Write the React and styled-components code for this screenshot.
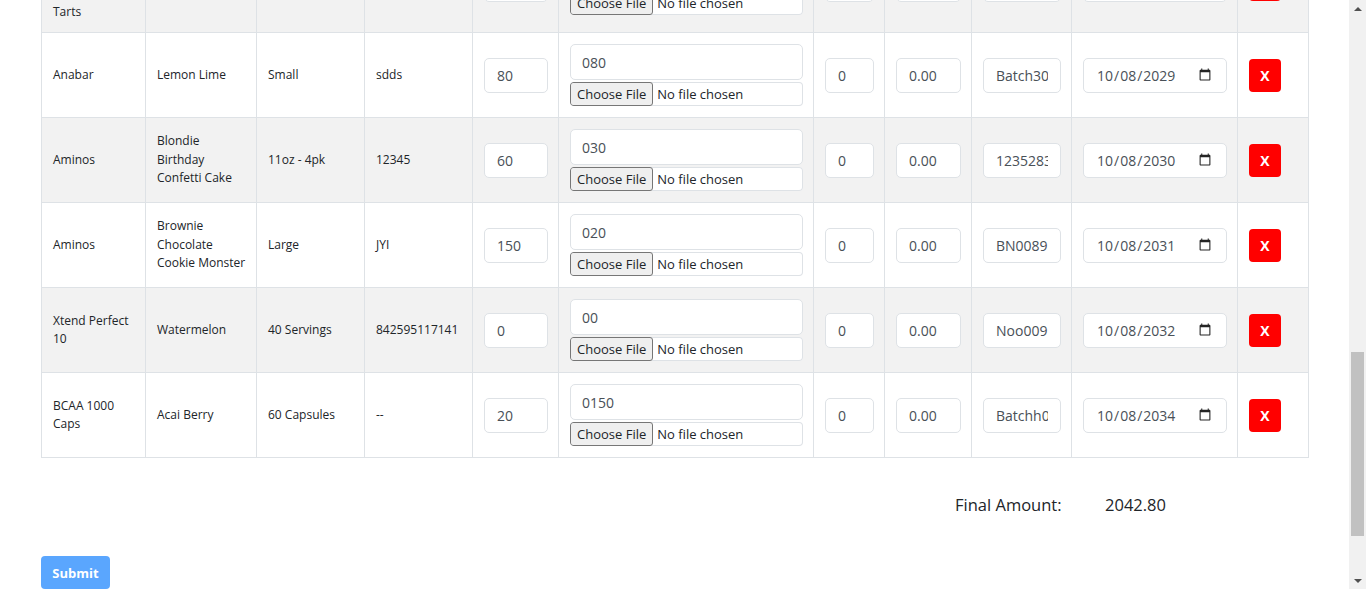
import React from "react";
import styled, { createGlobalStyle } from "styled-components";

const GlobalStyle = createGlobalStyle`
  html, body {
    margin: 0;
    padding: 0;
    background: #fff;
    overflow: hidden;
  }
  body {
    font-family: "Open Sans", "Noto Sans", sans-serif;
    color: #212529;
  }
`;

const Screen = styled.div`
  display: flex;
  width: 1366px;
  height: 589px;
`;

const Page = styled.main`
  flex: 1;
  height: 589px;
  overflow: hidden;
  padding: 0 41px;
  box-sizing: border-box;
`;

// the page is scrolled, so the first row sits partly above the window
const Table = styled.table`
  width: 100%;
  margin-top: -65px;
  border-collapse: collapse;
  table-layout: fixed;
  border: 1px solid #dee2e6;
`;

const Row = styled.tr`
  background: ${(p) => (p.$striped ? "#f2f2f2" : "#fff")};
  height: 85px;
`;

const Cell = styled.td`
  border: 1px solid #dee2e6;
  padding: ${(p) => (p.$text ? "11px 9px 11px 11px" : "11px 10px 11px 11px")};
  vertical-align: middle;
  font-size: 12px;
  line-height: 18.5px;
  color: #212529;
  box-sizing: border-box;
`;

const Field = styled.input`
  display: block;
  width: 100%;
  box-sizing: border-box;
  height: 35px;
  padding: 6px 12px;
  font-family: "Open Sans", "Noto Sans", sans-serif;
  font-size: 14px;
  line-height: 21px;
  color: #495057;
  background: #fff;
  border: 1px solid #dee2e6;
  border-radius: 5px;
  outline: none;

  &::-webkit-calendar-picker-indicator {
    opacity: 0.85;
  }
`;

const CodeField = styled(Field)`
  height: 36px;
  padding-left: 11px;
`;

const FileField = styled.input`
  display: block;
  width: 100%;
  box-sizing: border-box;
  height: 24px;
  margin-top: 2px;
  padding: 0;
  font-family: "Open Sans", "Noto Sans", sans-serif;
  font-size: 13px;
  line-height: 24px;
  color: #212529;
  background: #fff;
  border: none;
  border-radius: 4px;
  box-shadow: inset 0 0 0 1px #dee2e6;

  &::file-selector-button {
    box-sizing: border-box;
    height: 24px;
    margin: 0 4px 0 0;
    padding: 0 6px;
    font-family: "Open Sans", "Noto Sans", sans-serif;
    font-size: 13px;
    color: #212529;
    background: #efefef;
    border: 1px solid #767676;
    border-radius: 3px;
  }
`;

const RemoveButton = styled.button`
  display: block;
  width: 32px;
  height: 33px;
  padding: 0;
  border: none;
  border-radius: 4px;
  background: #ff0000;
  color: #fff;
  font-family: "Open Sans", "Noto Sans", sans-serif;
  font-weight: 700;
  font-size: 14px;
`;

const Total = styled.div`
  display: flex;
  justify-content: flex-end;
  padding-right: 142px;
  margin-top: 34px;
  font-size: 16.5px;
  line-height: 25px;
  color: #212529;
`;

const TotalLabel = styled.span`
  width: 150px;
`;

const SubmitButton = styled.button`
  display: block;
  margin-top: 39px;
  width: 69px;
  height: 33px;
  padding: 0;
  border: none;
  border-radius: 4px;
  background: #5aa6fe;
  color: #fff;
  font-family: "Open Sans", "Noto Sans", sans-serif;
  font-weight: 700;
  font-size: 13px;
`;

const Scrollbar = styled.div`
  width: 17px;
  height: 589px;
  background: #f1f1f1;
  display: flex;
  flex-direction: column;
  align-items: center;
`;

const Arrow = styled.div`
  width: 17px;
  height: 17px;
  display: flex;
  align-items: center;
  justify-content: center;

  &::after {
    content: "";
    border-left: 4px solid transparent;
    border-right: 4px solid transparent;
    ${(p) =>
      p.$down
        ? "border-top: 4px solid #505050;"
        : "border-bottom: 4px solid #505050;"}
  }
`;

const Track = styled.div`
  flex: 1;
  width: 100%;
  display: flex;
  justify-content: center;
`;

const Thumb = styled.div`
  width: 13px;
  height: 184px;
  margin-top: 335px;
  background: #c1c1c1;
`;

const widths = [104, 111, 108, 108, 86, 255, 71, 87, 100, 166, 71];

const rows = [
  { brand: "Legendary Foods Protein Strawberry Tarts", flavor: "Frosted", size: "8 Pack", upc: "8225", qty: "40", code: "040", batch: "Batch1120", date: "2029-06-04" },
  { brand: "Anabar", flavor: "Lemon Lime", size: "Small", upc: "sdds", qty: "80", code: "080", batch: "Batch3021", date: "2029-10-08" },
  { brand: "Aminos", flavor: "Blondie Birthday Confetti Cake", size: "11oz - 4pk", upc: "12345", qty: "60", code: "030", batch: "123528345", date: "2030-10-08" },
  { brand: "Aminos", flavor: "Brownie Chocolate Cookie Monster", size: "Large", upc: "JYI", qty: "150", code: "020", batch: "BN008912", date: "2031-10-08" },
  { brand: "Xtend Perfect 10", flavor: "Watermelon", size: "40 Servings", upc: "842595117141", qty: "0", code: "00", batch: "Noo009123", date: "2032-10-08" },
  { brand: "BCAA 1000 Caps", flavor: "Acai Berry", size: "60 Capsules", upc: "--", qty: "20", code: "0150", batch: "Batchh0912", date: "2034-10-08" },
];

export default function App() {
  return (
    <Screen>
      <GlobalStyle />
      <Page>
        <Table>
          <colgroup>
            {widths.map((w, i) => (
              <col key={i} style={{ width: w }} />
            ))}
          </colgroup>
          <tbody>
            {rows.map((r, i) => (
              <Row key={i} $striped={i % 2 === 0}>
                <Cell $text>{r.brand}</Cell>
                <Cell $text>{r.flavor}</Cell>
                <Cell $text>{r.size}</Cell>
                <Cell $text>{r.upc}</Cell>
                <Cell>
                  <Field type="text" defaultValue={r.qty} />
                </Cell>
                <Cell>
                  <CodeField type="text" defaultValue={r.code} />
                  <FileField type="file" />
                </Cell>
                <Cell>
                  <Field type="text" defaultValue="0" />
                </Cell>
                <Cell>
                  <Field type="text" defaultValue="0.00" />
                </Cell>
                <Cell>
                  <Field type="text" defaultValue={r.batch} />
                </Cell>
                <Cell>
                  <Field type="date" defaultValue={r.date} />
                </Cell>
                <Cell>
                  <RemoveButton>X</RemoveButton>
                </Cell>
              </Row>
            ))}
          </tbody>
        </Table>
        <Total>
          <TotalLabel>Final Amount:</TotalLabel>
          <span>2042.80</span>
        </Total>
        <SubmitButton>Submit</SubmitButton>
      </Page>
      <Scrollbar>
        <Arrow />
        <Track>
          <Thumb />
        </Track>
        <Arrow $down />
      </Scrollbar>
    </Screen>
  );
}
